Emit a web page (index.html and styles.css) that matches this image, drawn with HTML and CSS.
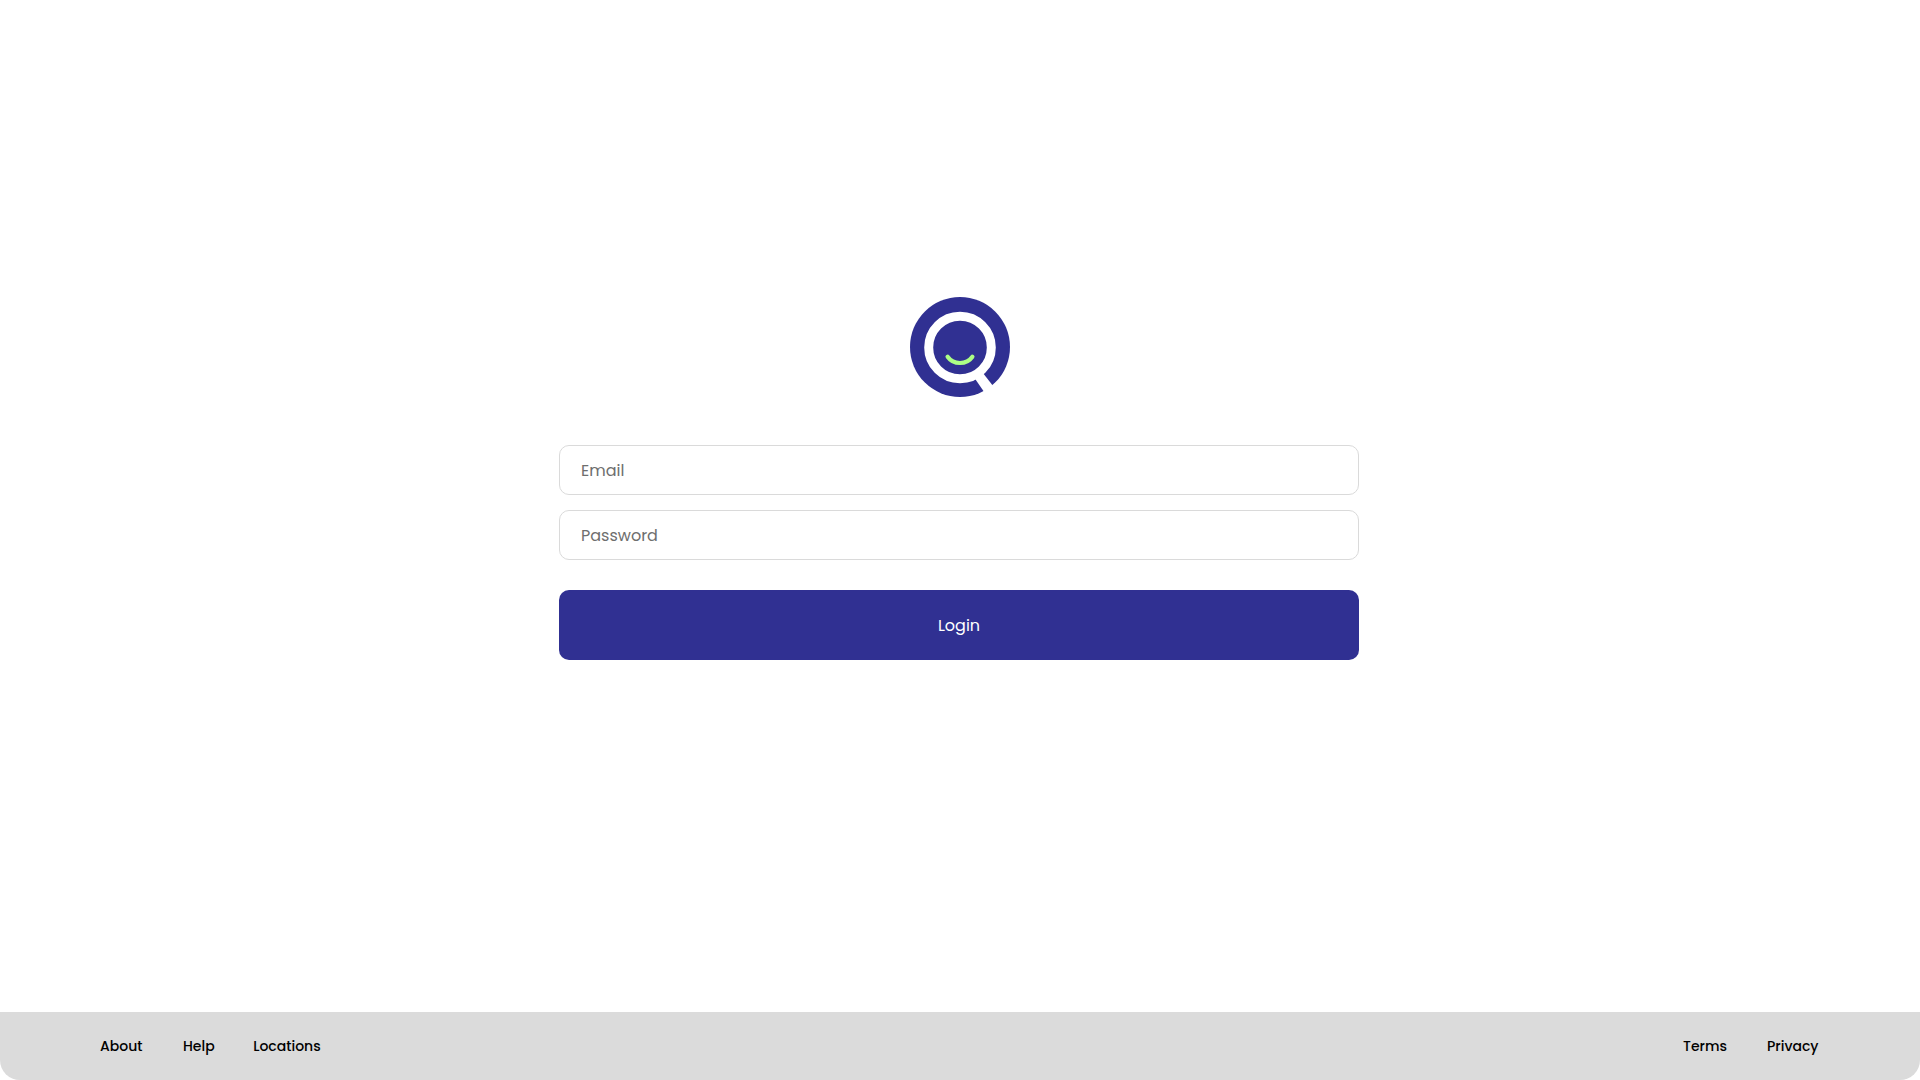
FILE: index.html
```html
<!DOCTYPE html>
<html lang="en">
<head>
<meta charset="utf-8">
<title>Login</title>
<link rel="stylesheet" href="styles.css">
</head>
<body>
<div class="page">
  <main class="content">
    <svg class="logo" viewBox="0 0 100 100" aria-hidden="true">
      <circle cx="50" cy="50" r="50" fill="#303092"/>
      <circle cx="50" cy="50.5" r="31.3" fill="none" stroke="#fff" stroke-width="9"/>
      <path d="M65.2 82 73.3 76.6 86 92.8 77.6 100Z" fill="#fff"/>
      <path d="M37.6 59.7C43.5 68.1 56.5 68.1 62.4 59.7" fill="none" stroke="#adff85" stroke-width="4.2" stroke-linecap="round"/>
    </svg>
    <form class="form">
      <input class="field" type="email" placeholder="Email">
      <input class="field" type="password" placeholder="Password">
      <button class="submit" type="button">Login</button>
    </form>
  </main>
  <footer class="footer">
    <nav class="links">
      <a class="link link-about">About</a>
      <a class="link link-help">Help</a>
      <a class="link">Locations</a>
    </nav>
    <nav class="links">
      <a class="link link-terms">Terms</a>
      <a class="link">Privacy</a>
    </nav>
  </footer>
</div>
</body>
</html>
```
FILE: styles.css
```css
* { box-sizing: border-box; }
body {
  margin: 0;
  background: #fff;
  font-family: Poppins, Inter, "Open Sans", sans-serif;
}
.page {
  height: 1080px;
  display: flex;
  flex-direction: column;
  overflow: hidden;
}
.content {
  flex: 1;
  display: flex;
  flex-direction: column;
  align-items: center;
  padding-top: 297px;
}
.logo { width: 100px; height: 100px; }
.form {
  width: 800px;
  margin: 48px 2px 0 0;
  display: flex;
  flex-direction: column;
  gap: 15px;
}
.field {
  height: 50px;
  padding: 0 20px 0 21px;
  border: 1px solid #dadada;
  border-radius: 10px;
  background: #fff;
  font: inherit;
  font-size: 16px;
  outline: none;
}
.field::placeholder { color: #6e6e6e; }
.submit {
  height: 70px;
  margin-top: 15px;
  border: 0;
  border-radius: 10px;
  background: #303092;
  color: #fff;
  font: inherit;
  font-size: 16px;
}
.footer {
  height: 68px;
  padding: 0 101.5px 0 100px;
  display: flex;
  align-items: center;
  justify-content: space-between;
  background: #dbdbdb;
  border-radius: 0 0 20px 20px;
}
.links { display: flex; }
.link {
  font-size: 14px;
  font-weight: 500;
  color: #000;
}
.link-about { margin-right: 40.5px; }
.link-help { margin-right: 38.5px; }
.link-terms { margin-right: 40px; }
```
